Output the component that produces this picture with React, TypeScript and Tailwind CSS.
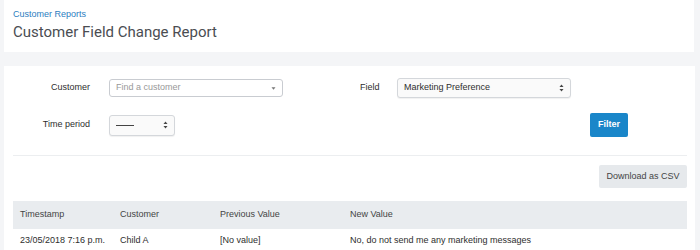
import React from "react";

function Updown() {
  return (
    <svg width="5" height="8" viewBox="0 0 5 8" className="shrink-0">
      <path d="M2.5 0.5 L4.5 3 L0.5 3 Z" fill="#444" />
      <path d="M2.5 7.5 L4.5 5 L0.5 5 Z" fill="#444" />
    </svg>
  );
}

export default function App() {
  return (
    <div
      className="w-[700px] h-[250px] overflow-hidden bg-[#f4f5f7] text-[#333]"
      style={{ fontFamily: "'Liberation Sans', Arial, sans-serif" }}
    >
      <div className="ml-[4px] mr-[6px] h-[52px] bg-white pl-[9px] pt-[9px]">
        <div className="text-[9px] leading-[11px] text-[#2c7dc0]">Customer Reports</div>
        <div
          className="mt-[2px] text-[15px] leading-[20px] text-[#4a4d52]"
          style={{ fontFamily: "Roboto, 'Liberation Sans', sans-serif" }}
        >
          Customer Field Change Report
        </div>
      </div>
      <div className="ml-[4px] mr-[5px] mt-[14px] h-[200px] bg-white pl-[9px] pr-[8px] pt-[12px]">
        <div className="flex h-[20px] items-center">
          <div className="w-[77px] text-right text-[9px] text-[#2e2e2e]">Customer</div>
          <div className="ml-[19px] flex h-[18px] w-[174px] items-center justify-between rounded-[3px] border border-[#c9ccd1] px-[6px]">
            <span className="text-[9px] text-[#999]">Find a customer</span>
            <svg width="5" height="3" viewBox="0 0 5 3"><path d="M0.5 0.2 L4.5 0.2 L2.5 2.8 Z" fill="#777" /></svg>
          </div>
          <div className="ml-[77px] w-[37px] text-[9px] text-[#2e2e2e]">Field</div>
          <div className="flex h-[20px] w-[174px] items-center justify-between rounded-[3px] border border-[#d4d7db] bg-[#fafafa] px-[6px] shadow-[0_1px_1px_rgba(0,0,0,0.06)]">
            <span className="text-[9px] text-[#2e2e2e]">Marketing Preference</span>
            <Updown />
          </div>
        </div>
        <div className="mt-[15px] flex h-[24px] items-center">
          <div className="w-[77px] text-right text-[9px] text-[#2e2e2e]">Time period</div>
          <div className="ml-[19px] flex h-[21px] w-[66px] items-center justify-between rounded-[3px] border border-[#d4d7db] bg-[#fafafa] px-[6px] shadow-[0_1px_1px_rgba(0,0,0,0.06)]">
            <span className="block h-px w-[18px] bg-[#444]" />
            <Updown />
          </div>
          <div className="ml-auto mr-[59px] flex h-[24px] w-[38px] items-center justify-center rounded-[2px] bg-[#1a86c9] text-[9px] font-bold text-white">
            Filter
          </div>
        </div>
        <div className="mt-[18px] h-px bg-[#eceef0]" />
        <div className="mt-[9px] flex justify-end">
          <div className="flex h-[23px] w-[88px] items-center justify-center rounded-[2px] bg-[#e6e9ec] text-[9px] text-[#444]">
            Download as CSV
          </div>
        </div>
        <div className="mt-[13px] flex h-[28px] items-center bg-[#e9ecef] text-[9px] text-[#444]">
          <div className="w-[107px] pl-[7px]">Timestamp</div>
          <div className="w-[100px]">Customer</div>
          <div className="w-[130px]">Previous Value</div>
          <div>New Value</div>
        </div>
        <div className="flex h-[24px] items-center text-[9px] text-[#2e2e2e]">
          <div className="w-[107px] pl-[7px]">23/05/2018 7:16 p.m.</div>
          <div className="w-[100px]">Child A</div>
          <div className="w-[130px]">[No value]</div>
          <div>No, do not send me any marketing messages</div>
        </div>
      </div>
    </div>
  );
}
